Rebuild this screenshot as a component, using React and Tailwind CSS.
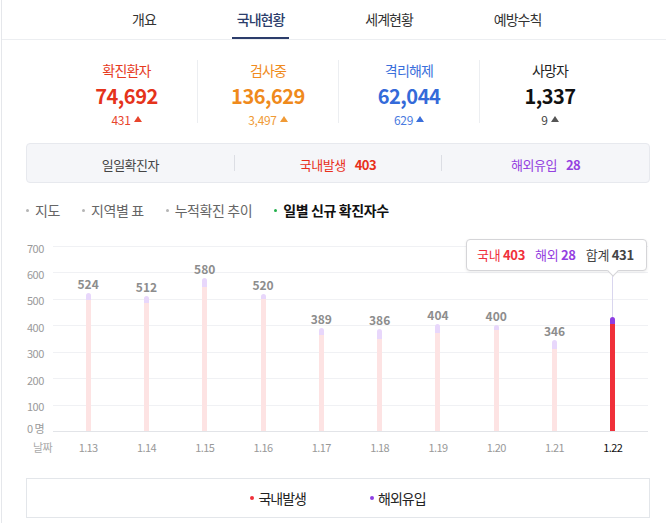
const TABS = ["개요", "국내현황", "세계현황", "예방수칙"];

const STATS = [
  { label: "확진환자", value: "74,692", diff: "431", labelCls: "text-[#e63b1f]", numCls: "text-[#e5331b]", subCls: "text-[#e8452c]", tri: "#e8452c" },
  { label: "검사중", value: "136,629", diff: "3,497", labelCls: "text-[#f08b1d]", numCls: "text-[#ef8a1c]", subCls: "text-[#f09a36]", tri: "#f09a36" },
  { label: "격리해제", value: "62,044", diff: "629", labelCls: "text-[#3b6fdb]", numCls: "text-[#346ad9]", subCls: "text-[#4a7be0]", tri: "#3b6fdb" },
  { label: "사망자", value: "1,337", diff: "9", labelCls: "text-[#222]", numCls: "text-[#111]", subCls: "text-[#444]", tri: "#555" },
];

const SUBTABS = ["지도", "지역별 표", "누적확진 추이", "일별 신규 확진자수"];

const DAYS = [
  { d: "1.13", total: 524, ov: 28 },
  { d: "1.14", total: 512, ov: 28 },
  { d: "1.15", total: 580, ov: 34 },
  { d: "1.16", total: 520, ov: 19 },
  { d: "1.17", total: 389, ov: 25 },
  { d: "1.18", total: 386, ov: 36 },
  { d: "1.19", total: 404, ov: 33 },
  { d: "1.20", total: 400, ov: 19 },
  { d: "1.21", total: 346, ov: 34 },
  { d: "1.22", total: 431, ov: 28, active: true },
];

const Y_TICKS = ["700", "600", "500", "400", "300", "200", "100", "0 명"];
const SCALE = 185 / 700;

function Tri({ color }) {
  return (
    <svg width="8" height="6" viewBox="0 0 8 6" className="ml-[3px] -mt-[2px]">
      <path d="M4 0 L8 6 L0 6 Z" fill={color} />
    </svg>
  );
}

function Bar({ day }) {
  const h = day.total * SCALE;
  return (
    <div className="flex flex-1 flex-col items-center justify-end">
      {!day.active && (
        <span className="mb-[2px] text-[12px] font-semibold leading-[14px] text-[#8d8d8d]">
          {day.total}
        </span>
      )}
      <div className="flex w-[5px] flex-col overflow-hidden rounded-t-[3px]" style={{ height: h }}>
        <div className={day.active ? "bg-[#8e3fe3]" : "bg-[#e8d7fb]"} style={{ height: day.ov * SCALE }} />
        <div className={`flex-1 ${day.active ? "bg-[#f0303a]" : "bg-[#fde3e3]"}`} />
      </div>
    </div>
  );
}

export default function App() {
  return (
    <div className="min-h-[523px] w-[666px] bg-white font-['Noto_Sans_CJK_KR','Noto_Sans',sans-serif] text-[#222]">
      <div className="ml-px min-h-[523px] border-l border-[#e5e7eb]">
        {/* top tabs */}
        <nav className="flex h-[40px] gap-[71px] border-b border-[#eceef1] pl-[125px]">
          {TABS.map((t) => (
            <div
              key={t}
              className={`flex h-[39px] items-center border-b-2 px-[5px] pt-[2px] text-[14px] tracking-[-1px] ${
                t === "국내현황" ? "border-[#2c3d6b] font-medium text-[#2c3d6b]" : "border-transparent text-[#333]"
              }`}
            >
              {t}
            </div>
          ))}
        </nav>

        {/* stats */}
        <div className="ml-[54px] mt-[20px] flex">
          {STATS.map((s, i) => (
            <div
              key={s.label}
              className={`flex h-[63px] w-[141px] flex-col items-center ${i > 0 ? "border-l border-[#eceef1]" : ""}`}
            >
              <span className={`text-[14px] leading-[20px] tracking-[-0.8px] ${s.labelCls}`}>{s.label}</span>
              <span className={`mt-[4px] text-[20px] font-bold leading-[24px] tracking-[-0.5px] ${s.numCls}`}>
                {s.value}
              </span>
              <span className={`mt-[4px] flex items-center text-[12px] leading-[16px] tracking-[-0.3px] ${s.subCls}`}>
                {s.diff}
                <Tri color={s.tri} />
              </span>
            </div>
          ))}
        </div>

        {/* daily summary box */}
        <div className="ml-[24px] mt-[20px] flex h-[40px] w-[624px] items-center rounded-[4px] border border-[#e7e9ee] bg-[#f5f6f9] text-[13px] tracking-[-0.5px]">
          <div className="flex h-[16px] flex-1 items-center justify-center pt-[3px] text-[#444]">일일확진자</div>
          <div className="flex h-[16px] flex-1 items-center justify-center border-l border-[#dcdee4] pt-[3px] text-[#e8301c]">
            국내발생<b className="ml-[9px] font-bold">403</b>
          </div>
          <div className="flex h-[16px] flex-1 items-center justify-center border-l border-[#dcdee4] pt-[3px] text-[#9440e0]">
            해외유입<b className="ml-[9px] font-bold">28</b>
          </div>
        </div>

        {/* sub tabs */}
        <div className="ml-[24px] mt-[17px] flex h-[20px] items-center gap-[22px] text-[14px] tracking-[-0.4px]">
          {SUBTABS.map((t, i) => {
            const active = i === SUBTABS.length - 1;
            return (
              <div key={t} className="flex items-center">
                <span className={`h-[3px] w-[3px] rounded-full ${active ? "bg-[#22b04b]" : "bg-[#b5b5b5]"}`} />
                <span className={`ml-[6px] ${active ? "font-bold text-[#111]" : "text-[#666]"}`}>{t}</span>
              </div>
            );
          })}
        </div>

        {/* chart */}
        <div className="mt-[26px] flex pl-[25px]">
          <div className="flex h-[186px] w-[26px] flex-col justify-between text-[11px] tracking-[-0.5px] text-[#9a9a9a]">
            {Y_TICKS.map((y, i) => (
              <div key={y} className="flex h-px items-center">
                <span className={`leading-[14px] whitespace-nowrap ${i === Y_TICKS.length - 1 ? "-translate-y-[3px]" : "translate-y-px"}`}>
                  {y}
                </span>
              </div>
            ))}
          </div>
          <div className="relative h-[186px] w-[595px]">
            <div className="flex h-full flex-col justify-between">
              {Y_TICKS.map((y, i) => (
                <div key={y} className={`h-px ${i === Y_TICKS.length - 1 ? "bg-[#e2e4e8]" : "bg-[#f0f1f4]"}`} />
              ))}
            </div>
            <div className="absolute left-[6px] right-[6px] top-0 flex h-[185px]">
              {DAYS.map((d) => (
                <Bar key={d.d} day={d} />
              ))}
            </div>
            {/* tooltip */}
            <div className="absolute left-[559px] top-[29px] h-[42px] w-px bg-[#d9d6ee]" />
            <div className="absolute left-[413px] top-[-7px] flex h-[32px] w-[181px] items-center rounded-[4px] border border-[#d5d5d8] bg-white pl-[10px] text-[13px] tracking-[-0.3px] shadow-[0_1px_3px_rgba(0,0,0,0.08)]">
              <span className="text-[#f0303a]">
                국내 <b className="font-bold">403</b>
              </span>
              <span className="ml-[10px] text-[#9440e0]">
                해외 <b className="font-bold">28</b>
              </span>
              <span className="ml-[10px] text-[#444]">
                합계 <b className="font-bold">431</b>
              </span>
              <div className="absolute -bottom-[5px] left-[142px] h-[8px] w-[8px] rotate-45 border-b border-r border-[#d5d5d8] bg-white" />
            </div>
          </div>
        </div>

        {/* x labels */}
        <div className="mt-[7px] flex h-[16px] items-center pl-[25px] text-[11px] tracking-[-0.6px]">
          <div className="w-[26px] whitespace-nowrap pl-[6px] text-[#aaa]">날짜</div>
          <div className="flex w-[595px] px-[6px]">
            {DAYS.map((d) => (
              <div key={d.d} className={`flex-1 text-center ${d.active ? "text-[#111]" : "text-[#999]"}`}>
                {d.d}
              </div>
            ))}
          </div>
        </div>

        {/* legend */}
        <div className="ml-[24px] mt-[23px] flex h-[40px] w-[624px] items-center justify-center gap-[64px] border border-[#e3e6ea] text-[14px] tracking-[-1px]">
          <div className="flex items-center">
            <span className="h-[4px] w-[4px] rounded-full bg-[#f0303a]" />
            <span className="ml-[4px]">국내발생</span>
          </div>
          <div className="flex items-center">
            <span className="h-[4px] w-[4px] rounded-full bg-[#8e3fe3]" />
            <span className="ml-[4px]">해외유입</span>
          </div>
        </div>
      </div>
    </div>
  );
}
